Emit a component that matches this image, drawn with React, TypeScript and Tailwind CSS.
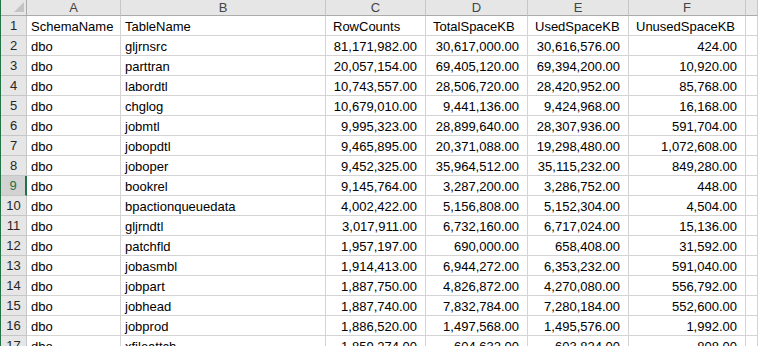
import React from 'react';

const cols = 'grid grid-cols-[26px_94px_205px_100px_102px_101px_117px_1fr]';

const rows: string[][] = [
  ['dbo', 'gljrnsrc', '81,171,982.00', '30,617,000.00', '30,616,576.00', '424.00'],
  ['dbo', 'parttran', '20,057,154.00', '69,405,120.00', '69,394,200.00', '10,920.00'],
  ['dbo', 'labordtl', '10,743,557.00', '28,506,720.00', '28,420,952.00', '85,768.00'],
  ['dbo', 'chglog', '10,679,010.00', '9,441,136.00', '9,424,968.00', '16,168.00'],
  ['dbo', 'jobmtl', '9,995,323.00', '28,899,640.00', '28,307,936.00', '591,704.00'],
  ['dbo', 'jobopdtl', '9,465,895.00', '20,371,088.00', '19,298,480.00', '1,072,608.00'],
  ['dbo', 'joboper', '9,452,325.00', '35,964,512.00', '35,115,232.00', '849,280.00'],
  ['dbo', 'bookrel', '9,145,764.00', '3,287,200.00', '3,286,752.00', '448.00'],
  ['dbo', 'bpactionqueuedata', '4,002,422.00', '5,156,808.00', '5,152,304.00', '4,504.00'],
  ['dbo', 'gljrndtl', '3,017,911.00', '6,732,160.00', '6,717,024.00', '15,136.00'],
  ['dbo', 'patchfld', '1,957,197.00', '690,000.00', '658,408.00', '31,592.00'],
  ['dbo', 'jobasmbl', '1,914,413.00', '6,944,272.00', '6,353,232.00', '591,040.00'],
  ['dbo', 'jobpart', '1,887,750.00', '4,826,872.00', '4,270,080.00', '556,792.00'],
  ['dbo', 'jobhead', '1,887,740.00', '7,832,784.00', '7,280,184.00', '552,600.00'],
  ['dbo', 'jobprod', '1,886,520.00', '1,497,568.00', '1,495,576.00', '1,992.00'],
  ['dbo', 'xfileattch', '1,859,274.00', '604,632.00', '603,824.00', '808.00'],
];

const headers = ['SchemaName', 'TableName', 'RowCounts', 'TotalSpaceKB', 'UsedSpaceKB', 'UnusedSpaceKB'];

function RowHead({ n, selected }: { n: number; selected?: boolean }) {
  return (
    <div
      className={
        selected
          ? 'flex items-center justify-center bg-[#d2d2d2] text-[#217346] border-b border-[#c6c6c6] border-r-2 border-r-[#217346]'
          : 'flex items-center justify-center bg-[#e6e6e6] text-[#262626] border-b border-r border-[#c6c6c6]'
      }
    >
      {n}
    </div>
  );
}

export default function App() {
  return (
    <div
      className="w-[758px] h-[346px] overflow-hidden bg-white border-l border-[#217346] text-[13px] leading-none text-black"
      style={{ fontFamily: '"Liberation Sans", Arial, sans-serif' }}
    >
      <div className={`${cols} h-[16px] bg-[#e6e6e6] text-[#444]`}>
        <div className="relative border-r border-b border-[#ababab]">
          <svg width="26" height="15" className="absolute left-0 top-0">
            <polygon points="23,2 23,12 13,12" fill="#c4c4c4" />
          </svg>
        </div>
        {['A', 'B', 'C', 'D', 'E', 'F', ''].map((c, i) => (
          <div key={i} className="flex items-center justify-center border-r border-b border-[#ababab] border-r-[#c6c6c6]">
            {c}
          </div>
        ))}
      </div>

      <div className={`${cols} h-[20px]`}>
        <RowHead n={1} />
        {headers.map((h, i) => (
          <div
            key={h}
            className={`flex items-center pt-[2px] border-r border-b border-[#d4d4d4] ${i < 2 ? 'pl-[4px]' : 'pl-[7px]'}`}
          >
            {h}
          </div>
        ))}
        <div className="border-r border-b border-[#d4d4d4]" />
      </div>

      {rows.map((r, idx) => (
        <div key={idx} className={`${cols} h-[20px]`}>
          <RowHead n={idx + 2} selected={idx + 2 === 9} />
          {r.map((v, i) => (
            <div
              key={i}
              className={`flex items-center pt-[2px] border-r border-b border-[#d4d4d4] ${
                i < 2 ? 'pl-[4px]' : 'justify-end pr-[8px]'
              }`}
            >
              {v}
            </div>
          ))}
          <div className="border-r border-b border-[#d4d4d4]" />
        </div>
      ))}
    </div>
  );
}
